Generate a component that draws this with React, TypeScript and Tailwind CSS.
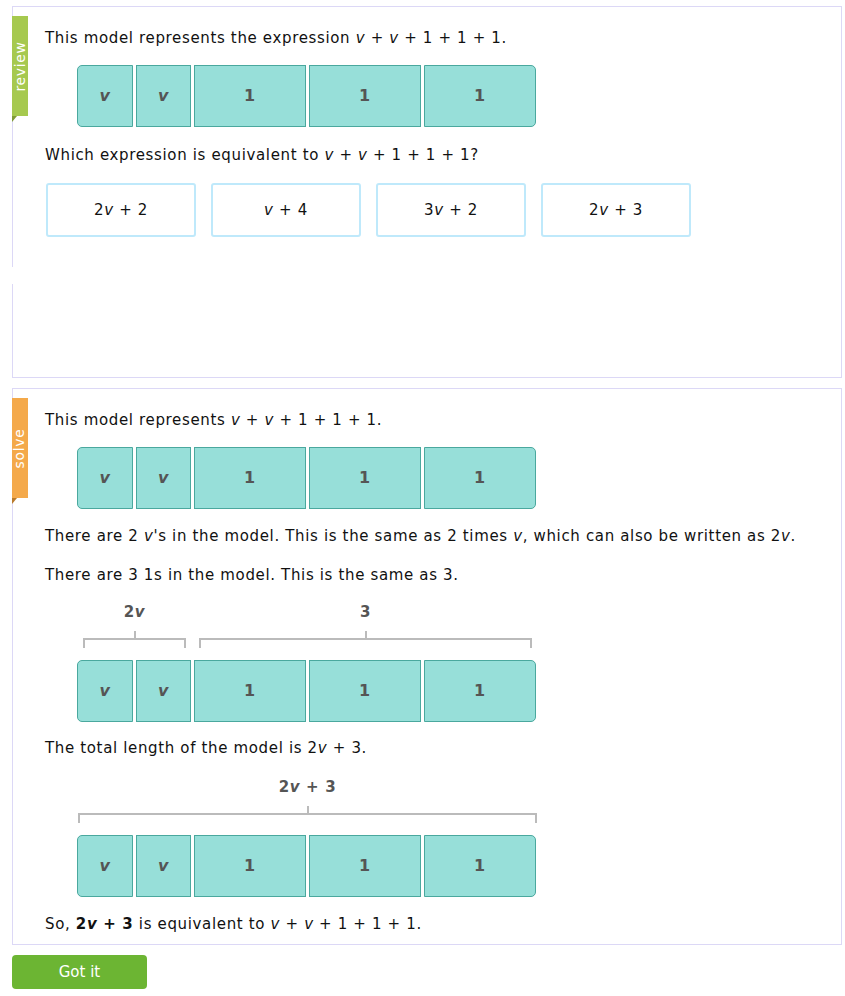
import type { ReactNode } from 'react'

const font = { fontFamily: '"DejaVu Sans", Verdana, sans-serif' }

function V() {
  return <i>v</i>
}

function Cell({ cls, children }: { cls: string; children: ReactNode }) {
  return (
    <div className={`h-[62px] bg-[#97dfd9] border border-[#4aa89e] flex items-center justify-center font-bold text-[#555] text-[16px] ${cls}`}>
      <span>{children}</span>
    </div>
  )
}

function Model() {
  return (
    <div className="ml-[32px] flex gap-[3px]">
      <Cell cls="w-[56px] rounded-l-[5px]"><V /></Cell>
      <Cell cls="w-[55px]"><V /></Cell>
      <Cell cls="w-[112px]">1</Cell>
      <Cell cls="w-[112px]">1</Cell>
      <Cell cls="w-[112px] rounded-r-[5px]">1</Cell>
    </div>
  )
}

function Bracket({ w, children }: { w: number; children: ReactNode }) {
  return (
    <div className="flex flex-col items-center" style={{ width: w }}>
      <div className="h-[22px] leading-[22px] font-bold text-[#555]">{children}</div>
      <svg width={w} height={18} className="mt-[7px] block">
        <path d={`M1 18 V9 H${w - 1} V18 M${Math.round(w / 2)} 1 V9`} stroke="#bbb" strokeWidth={2} fill="none" />
      </svg>
    </div>
  )
}

function Line({ cls = '', children }: { cls?: string; children: ReactNode }) {
  return <div className={`h-[22px] leading-[22px] ${cls}`}>{children}</div>
}

function Tab({ label, bg, fold }: { label: string; bg: string; fold: string }) {
  return (
    <div className="absolute left-[-1px] top-[9px]">
      <div className={`w-[16px] h-[100px] ${bg} flex items-center justify-center`}>
        <span className="-rotate-90 text-white text-[14px] whitespace-nowrap">{label}</span>
      </div>
      <div className={`w-0 h-0 border-t-[6px] border-r-[5px] border-r-transparent ${fold}`} />
    </div>
  )
}

export default function App() {
  return (
    <div className="bg-white text-[#111] text-[15px] tracking-[0.65px] w-[845px] h-[996px]" style={font}>
      <div className="pt-[6px] ml-[12px] w-[830px]">
        <div className="relative border border-[#dcd8f6] h-[372px] pt-[20px] pl-[32px]">
          <Tab label="review" bg="bg-[#a6c94f]" fold="border-t-[#7f9a36]" />
          <div className="absolute left-[-1px] top-[260px] w-[1px] h-[17px] bg-white" />
          <Line>This model represents the expression <V /> + <V /> + 1 + 1 + 1.</Line>
          <div className="mt-[16px]"><Model /></div>
          <Line cls="mt-[17px]">Which expression is equivalent to <V /> + <V /> + 1 + 1 + 1?</Line>
          <div className="mt-[17px] ml-[1px] flex gap-[15px]">
            {[
              <>2<V /> + 2</>,
              <><V /> + 4</>,
              <>3<V /> + 2</>,
              <>2<V /> + 3</>,
            ].map((c, i) => (
              <div key={i} className="w-[150px] h-[54px] border-2 border-[#bfe9fb] rounded-[3px] flex items-center justify-center">
                <span>{c}</span>
              </div>
            ))}
          </div>
        </div>

        <div className="relative mt-[10px] border border-[#dcd8f6] pt-[20px] pb-[9px] pl-[32px]">
          <Tab label="solve" bg="bg-[#f4a94a]" fold="border-t-[#b97a2c]" />
          <Line>This model represents <V /> + <V /> + 1 + 1 + 1.</Line>
          <div className="mt-[16px]"><Model /></div>
          <Line cls="mt-[16px]">There are 2 <V />'s in the model. This is the same as 2 times <V />, which can also be written as 2<V />.</Line>
          <Line cls="mt-[17px]">There are 3 1s in the model. This is the same as 3.</Line>
          <div className="mt-[15px] ml-[38px] flex">
            <Bracket w={103}>2<V /></Bracket>
            <div className="ml-[13px]">
              <Bracket w={333}>3</Bracket>
            </div>
          </div>
          <div className="mt-[12px]"><Model /></div>
          <Line cls="mt-[15px]">The total length of the model is 2<V /> + 3.</Line>
          <div className="mt-[17px] ml-[33px]">
            <Bracket w={459}>2<V /> + 3</Bracket>
          </div>
          <div className="mt-[12px]"><Model /></div>
          <Line cls="mt-[16px]">So, <b>2<V /> + 3</b> is equivalent to <V /> + <V /> + 1 + 1 + 1.</Line>
        </div>

        <button className="mt-[10px] w-[135px] h-[34px] bg-[#6cb533] rounded-[4px] text-white text-[15px] tracking-normal">
          Got it
        </button>
      </div>
    </div>
  )
}
